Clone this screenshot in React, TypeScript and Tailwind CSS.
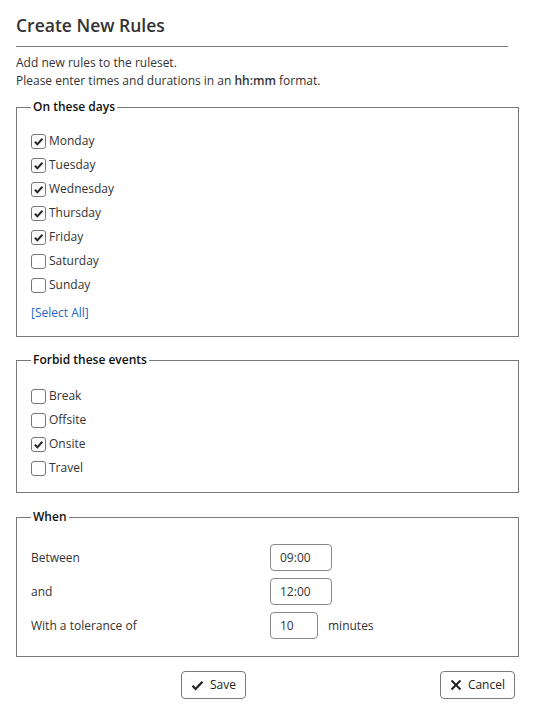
import type { ReactNode } from 'react';

const days = [
  { label: 'Monday', checked: true },
  { label: 'Tuesday', checked: true },
  { label: 'Wednesday', checked: true },
  { label: 'Thursday', checked: true },
  { label: 'Friday', checked: true },
  { label: 'Saturday', checked: false },
  { label: 'Sunday', checked: false },
];

const events = [
  { label: 'Break', checked: false },
  { label: 'Offsite', checked: false },
  { label: 'Onsite', checked: true },
  { label: 'Travel', checked: false },
];

const Check = ({ label, checked }: { label: string; checked: boolean }) => (
  <label className="flex h-6 items-center">
    <span className="flex h-[15px] w-[15px] items-center justify-center rounded-[3px] border border-[#767676] bg-white">
      {checked && (
        <svg width="11" height="11" viewBox="0 0 12 12">
          <path d="M2 6.2 L4.8 9 L10.2 3" fill="none" stroke="#2b2b2b" strokeWidth="2.2" />
        </svg>
      )}
    </span>
    <span className="ml-[3px] text-[12px] text-[#333]">{label}</span>
  </label>
);

const Group = ({ title, children, className }: { title: string; children: ReactNode; className?: string }) => (
  <fieldset className={`border border-[#7a7a7a] px-[14px] ${className ?? ''}`}>
    <legend className="px-[2px] text-[12px] leading-[18px] font-semibold text-[#111]">{title}</legend>
    {children}
  </fieldset>
);

const Field = ({ value, width }: { value: string; width: string }) => (
  <div className={`flex h-[27px] items-center rounded-[4px] border border-[#8a8a8a] bg-white pl-[9px] text-[12px] text-[#333] ${width}`}>
    {value}
  </div>
);

export default function App() {
  return (
    <div className="min-h-screen bg-white px-4 text-[#333]" style={{ fontFamily: '"Open Sans", "Liberation Sans", sans-serif' }}>
      <h1 className="pt-[13px] text-[17.5px] leading-[24px] font-semibold text-[#333]">Create New Rules</h1>
      <div className="mt-[9px] h-px w-[492px] bg-[#7a7a7a]" />
      <div className="mt-[7px] text-[12px] leading-[18px]">
        <p>Add new rules to the ruleset.</p>
        <p>
          Please enter times and durations in an <span className="font-semibold">hh:mm</span> format.
        </p>
      </div>

      <Group title="On these days" className="mt-[8px] pt-[13px] pb-[11px]">
        {days.map((d) => (
          <Check key={d.label} {...d} />
        ))}
        <div className="mt-[4px] h-6 text-[12px] leading-6 text-[#1a66c8]">[Select All]</div>
      </Group>

      <Group title="Forbid these events" className="mt-[14px] pt-[15px] pb-[12px]">
        {events.map((d) => (
          <Check key={d.label} {...d} />
        ))}
      </Group>

      <Group title="When" className="mt-[15px] pt-[18px] pb-[17px]">
        <div className="flex flex-col gap-[7px] text-[12px]">
          <div className="flex items-center">
            <span className="w-[239px]">Between</span>
            <Field value="09:00" width="w-[62px]" />
          </div>
          <div className="flex items-center">
            <span className="w-[239px]">and</span>
            <Field value="12:00" width="w-[62px]" />
          </div>
          <div className="flex items-center">
            <span className="w-[239px]">With a tolerance of</span>
            <Field value="10" width="w-[48px]" />
            <span className="ml-[10px]">minutes</span>
          </div>
        </div>
      </Group>

      <div className="mt-[14px] flex items-center pr-[4px]">
        <button className="ml-[165px] flex h-[28px] items-center gap-[6px] rounded-[4px] border border-[#7a7a7a] bg-white px-[9px] text-[12px] text-[#222]">
          <svg width="13" height="11" viewBox="0 0 13 11">
            <path d="M1.5 5.8 L4.6 9 L11.5 1.8" fill="none" stroke="#222" strokeWidth="2.2" />
          </svg>
          Save
        </button>
        <button className="ml-auto flex h-[28px] items-center gap-[6px] rounded-[4px] border border-[#7a7a7a] bg-white px-[9px] text-[12px] text-[#222]">
          <svg width="12" height="12" viewBox="0 0 12 12">
            <path d="M1.5 1.5 L10.5 10.5 M10.5 1.5 L1.5 10.5" fill="none" stroke="#222" strokeWidth="2" />
          </svg>
          Cancel
        </button>
      </div>
    </div>
  );
}
